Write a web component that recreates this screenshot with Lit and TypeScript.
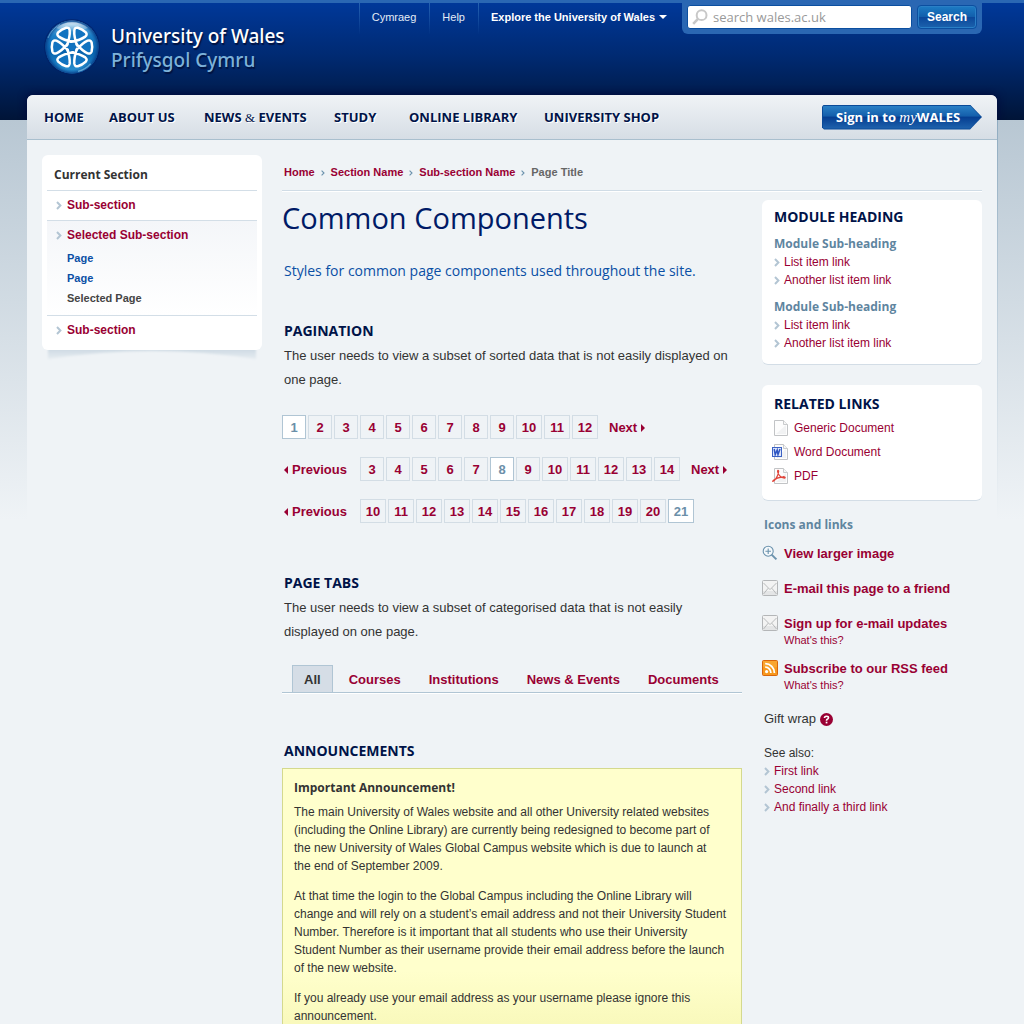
import { LitElement, html, css, svg, nothing } from "lit";
import { customElement, property } from "lit/decorators.js";
import { classMap } from "lit/directives/class-map.js";

const base = css`
  *, *::before, *::after { box-sizing: border-box; }
  h1, h2, h3, p, ul, ol { margin: 0; padding: 0; }
  ul, ol { list-style: none; }
  a { color: #990033; text-decoration: none; }
  a:hover { text-decoration: underline; }
  svg { display: block; flex: none; }
`;

const chevron = html`<svg class="chevron" width="6" height="9" viewBox="0 0 6 9" aria-hidden="true">
  <path d="M1 1 L4.4 4.5 L1 8" fill="none" stroke="#b3c5d3" stroke-width="2" />
</svg>`;

const crumbMark = html`<svg width="4" height="6" viewBox="0 0 4 6" aria-hidden="true">
  <path d="M0.6 0.6 L3 3 L0.6 5.4" fill="none" stroke="#6b92ad" stroke-width="1.1" />
</svg>`;

@customElement("uw-crest")
export class UwCrest extends LitElement {
  static styles = css`
    :host { display: block; flex: none; }
    svg { display: block; }
  `;

  render() {
    const petal = (angle: number) => svg`
      <path transform="rotate(${angle})"
        d="M4 3.4 C6.4 0.6 10.6 -4 15.6 -6.3 Q18.6 -7.4 19.6 -4.6 Q20.8 0 19.6 4.6 Q18.6 7.4 15.6 6.3 C10.6 4 6.4 -0.6 4 -3.4" />`;
    return html`
      <svg width="56" height="58" viewBox="-28 -28 56 58" role="img" aria-label="University of Wales crest">
        <defs>
          <linearGradient id="disc" x1="0" y1="0" x2="0" y2="1">
            <stop offset="0" stop-color="#8cc8ea" />
            <stop offset="0.28" stop-color="#1c7fc6" />
            <stop offset="0.6" stop-color="#0763ae" />
            <stop offset="1" stop-color="#2b96d6" />
          </linearGradient>
          <radialGradient id="rim" cx="0.5" cy="0.5" r="0.5">
            <stop offset="0.84" stop-color="#0a4e9c" stop-opacity="0" />
            <stop offset="1" stop-color="#073c86" stop-opacity="0.95" />
          </radialGradient>
          <linearGradient id="gloss" x1="0" y1="0" x2="0" y2="1">
            <stop offset="0" stop-color="#ffffff" stop-opacity="0.7" />
            <stop offset="1" stop-color="#ffffff" stop-opacity="0" />
          </linearGradient>
        </defs>
        <circle r="28" fill="#001f66" opacity="0.6" />
        <circle r="26.6" fill="url(#disc)" />
        <circle r="26.6" fill="url(#rim)" />
        <path d="M-16 -19 A25 25 0 0 1 16 -19 Q0 -11 -16 -19 Z" fill="url(#gloss)" />
        <path d="M-24 -9 A25.6 25.6 0 0 1 -12 -22.6" fill="none" stroke="#8cc6ea" stroke-width="1" opacity="0.6" />
        <path d="M6 24.4 A25 25 0 0 0 18.6 16.7" fill="none" stroke="#8cd0f2" stroke-width="1.4" opacity="0.6" />
        <g fill="#1173c0" stroke="#ffffff" stroke-width="2.5" stroke-linecap="round" stroke-linejoin="round">
          ${[0, 60, 120, 180, 240, 300].map(petal)}
        </g>
        <circle r="3.4" fill="#1173c0" />
      </svg>
    `;
  }
}

@customElement("uw-icon")
export class UwIcon extends LitElement {
  @property() name = "document";

  static styles = css`
    :host { display: block; flex: none; }
    svg { display: block; }
  `;

  private sheet(x: number) {
    return svg`
      <path d="M${x}.5 0.5 H${x + 9}.5 L${x + 13}.5 4.5 V15.5 H${x}.5 Z" fill="#fdfdfd" stroke="#c2c4c6" />
      <path d="M${x + 2} 14 L${x + 12} 5 V14 Z" fill="#f1f2f3" />
      <path d="M${x + 9}.5 0.5 V4.5 H${x + 13}.5" fill="#f6f6f6" stroke="#c9cbcd" />`;
  }

  private art() {
    switch (this.name) {
      case "word":
        return svg`${this.sheet(2)}
          <rect x="0.5" y="3.5" width="9" height="9" fill="#dfe7fa" stroke="#3c62c4" />
          <path d="M2.2 5 L3.2 10.6 L5.2 6 L6 10.6 L8 5" fill="none" stroke="#2f56c2" stroke-width="1.5" />`;
      case "pdf":
        return svg`${this.sheet(2)}
          <path d="M0.8 13.4 C2.6 12.8 6.2 8.6 6.6 3.4 C6.6 1.9 5.4 2.2 5.7 4 C6.2 7.2 9.4 9.8 12.4 10 C14 9.8 12.6 8.5 10.8 8.8 C7 9.2 3.2 10.8 1.2 12.6 Z"
            fill="none" stroke="#e0443a" stroke-width="1.3" stroke-linejoin="round" />`;
      case "zoom":
        return svg`
          <path d="M9.6 9.6 L14.4 14.4" stroke="#6b92ad" stroke-width="2" />
          <circle cx="6.2" cy="6.2" r="5" fill="#f4f8fb" stroke="#6b92ad" stroke-width="1.1" />
          <path d="M6.2 3.4 V9 M3.4 6.2 H9" stroke="#6b92ad" stroke-width="1.1" />`;
      case "mail":
        return svg`
          <rect x="0.5" y="0.5" width="15" height="15" rx="1" fill="#f3f3f3" stroke="#b4b6b8" />
          <path d="M1 11 H15 V15 H1 Z" fill="#e4e5e6" />
          <path d="M1.5 3 L8 9.6 L14.5 3 M1.5 14 L6.2 8.2 M14.5 14 L9.8 8.2" fill="none" stroke="#b2b4b6" stroke-width="0.9" />`;
      case "rss":
        return svg`
          <rect x="0.5" y="0.5" width="15" height="15" rx="1" fill="#f7981d" stroke="#d9650c" />
          <path d="M1 1 H15 V7 Q8 9 1 7 Z" fill="#fbb040" opacity="0.55" />
          <circle cx="4.6" cy="11.6" r="1.6" fill="#ffffff" />
          <path d="M3.2 7.2 A5.6 5.6 0 0 1 8.9 12.9 M3.2 3.7 A9.1 9.1 0 0 1 12.4 12.9" fill="none" stroke="#ffffff" stroke-width="1.8" />`;
      default:
        return this.sheet(2);
    }
  }

  render() {
    return html`<svg width="16" height="16" viewBox="0 0 16 16" aria-hidden="true">${this.art()}</svg>`;
  }
}

@customElement("uw-header")
export class UwHeader extends LitElement {
  static styles = [base, css`
    :host { display: block; color: #ffffff; font-family: "Liberation Sans", Arial, sans-serif; }
    .bar {
      display: flex; justify-content: space-between; align-items: flex-start;
      max-width: 970px; height: 95px; margin: 0 auto; padding: 0 15px 0 17px;
    }
    .brand { display: flex; align-items: center; gap: 11px; padding-top: 19px; }
    .brand:hover { text-decoration: none; }
    .names {
      display: flex; flex-direction: column;
      font: 500 19px/24px "Noto Sans", sans-serif;
      text-shadow: 1px 2px 1px #00123f;
    }
    .english { color: #ffffff; }
    .welsh { color: #7db2d9; }
    .tools { display: flex; align-items: flex-start; }
    .tool {
      display: flex; align-items: center; gap: 4px; height: 34px; padding: 0 13px 0 12px;
      border: 0; border-left: 1px solid;
      border-image: linear-gradient(#2a67b3, transparent) 1;
      background: none; color: #e4ecf6;
      font: 11px/16px "Liberation Sans", Arial, sans-serif;
    }
    .strong { padding-right: 15px; font-weight: 700; color: #ffffff; }
    .search {
      display: flex; gap: 5px; width: 300px; height: 34px; padding: 5px;
      background: #2a67b3; border-radius: 0 0 6px 6px;
    }
    .field {
      display: flex; align-items: center; gap: 5px; flex: 1; min-width: 0; padding-left: 4px;
      background: #ffffff; border: 1px solid #0b4fa0; border-radius: 3px;
    }
    .box {
      flex: 1; min-width: 0; padding: 0; border: 0; outline: 0; background: none; color: #333333;
      font: 13px/20px "Open Sans", sans-serif;
    }
    .box::placeholder { color: #999999; opacity: 1; }
    .go {
      width: 60px; padding: 0; border: 1px solid #0b4fa0; border-radius: 4px; color: #ffffff;
      background: linear-gradient(#1d7cc4, #125fac 48%, #0b489b 52%, #1c62ad);
      box-shadow: inset 0 0 0 1px #2a7fc6;
      font: 700 12px/16px "Liberation Sans", Arial, sans-serif;
    }
  `];

  render() {
    return html`
      <header class="bar">
        <a class="brand" href="#home">
          <uw-crest></uw-crest>
          <span class="names">
            <span class="english">University of Wales</span>
            <span class="welsh" lang="cy">Prifysgol Cymru</span>
          </span>
        </a>
        <div class="tools">
          <a class="tool" href="#cymraeg" lang="cy">Cymraeg</a>
          <a class="tool" href="#help">Help</a>
          <button class="tool strong" type="button">
            Explore the University of Wales
            <svg width="8" height="4" viewBox="0 0 8 4" aria-hidden="true"><path d="M0 0 H8 L4 4 Z" fill="#ffffff" /></svg>
          </button>
          <form class="search" role="search">
            <label class="field">
              <svg width="16" height="16" viewBox="0 0 16 16" aria-hidden="true">
                <circle cx="9.6" cy="6.2" r="4.9" fill="none" stroke="#c8c8c8" stroke-width="2" />
                <path d="M6 9.8 L1.2 14.8" stroke="#c8c8c8" stroke-width="2.6" />
              </svg>
              <input class="box" type="search" placeholder="search wales.ac.uk" aria-label="Search wales.ac.uk" />
            </label>
            <button class="go" type="button">Search</button>
          </form>
        </div>
      </header>
    `;
  }
}

@customElement("uw-nav")
export class UwNav extends LitElement {
  static styles = [base, css`
    :host { display: block; position: relative; z-index: 0; font-family: "Open Sans", sans-serif; }
    :host::before {
      content: ""; position: absolute; inset: 0 0 auto 0; height: 25px; z-index: -1;
      border-radius: 6px 6px 0 0; box-shadow: 0 0 8px 1px #000a3c;
      clip-path: inset(-10px -10px 0 -10px);
    }
    .nav {
      display: flex; justify-content: space-between; align-items: center;
      height: 45px; padding: 0 15px 0 17px;
      background: linear-gradient(#f0f3f6, #d6dde5);
      border-bottom: 1px solid #a9bfce; border-radius: 6px 6px 0 0;
    }
    .links { display: grid; grid-template-columns: 65px 95px 130px 75px 135px auto; }
    .link {
      color: #001348; font-size: 13px; font-weight: 700; line-height: 18px; white-space: nowrap;
      text-shadow: 1px 1px 0 #ffffff;
    }
    .amp { font-weight: 400; font-family: "Liberation Serif", serif; }
    .signin {
      display: block; padding: 1px; background: #0a4a98;
      clip-path: polygon(2px 0, 148px 0, 100% 50%, 148px 100%, 2px 100%, 0 23px, 0 2px);
    }
    .face {
      display: flex; align-items: center; width: 158px; height: 23px; padding-left: 13px;
      background: linear-gradient(#2a80c6, #1560ac 42%, #063f92 50%, #1f63ad);
      clip-path: polygon(1px 0, 147px 0, 100% 50%, 147px 100%, 1px 100%, 0 22px, 0 1px);
      color: #ffffff; font-size: 13px; font-weight: 700; white-space: pre;
    }
    .my { font: italic 400 15px/16px "Liberation Serif", serif; }
  `];

  render() {
    return html`
      <nav class="nav" aria-label="Main">
        <div class="links">
          <a class="link" href="#home">HOME</a>
          <a class="link" href="#about">ABOUT US</a>
          <a class="link" href="#news">NEWS <span class="amp">&amp;</span> EVENTS</a>
          <a class="link" href="#study">STUDY</a>
          <a class="link" href="#library">ONLINE LIBRARY</a>
          <a class="link" href="#shop">UNIVERSITY SHOP</a>
        </div>
        <a class="signin" href="#signin"><span class="face">Sign in to <span class="my">my</span>WALES</span></a>
      </nav>
    `;
  }
}

@customElement("uw-section-menu")
export class UwSectionMenu extends LitElement {
  static styles = [base, css`
    :host { display: block; font: 700 12px/18px "Liberation Sans", Arial, sans-serif; }
    .menu { padding: 0 5px 5px; background: #ffffff; border-radius: 6px; }
    .title {
      height: 35px; padding: 11px 7px 0; color: #333333;
      font: 700 12px/18px "Open Sans", sans-serif;
    }
    .item { padding: 5px 9px 6px; border-top: 1px solid #d3dee7; }
    .selected { padding-bottom: 7px; background: linear-gradient(#f4f6f9, #ffffff); }
    .link { display: flex; align-items: center; gap: 5px; }
    .pages { padding: 4px 0 0 11px; font-size: 11px; line-height: 20px; color: #444444; }
    .page { color: #0a4fa5; }
    .shadow { display: block; width: 100%; height: 12px; }
  `];

  render() {
    return html`
      <nav class="menu" aria-label="Section">
        <h2 class="title">Current Section</h2>
        <ul>
          <li class="item"><a class="link" href="#sub-1">${chevron}Sub-section</a></li>
          <li class="item selected">
            <a class="link" href="#sub-2">${chevron}Selected Sub-section</a>
            <ul class="pages">
              <li><a class="page" href="#page-1">Page</a></li>
              <li><a class="page" href="#page-2">Page</a></li>
              <li>Selected Page</li>
            </ul>
          </li>
          <li class="item"><a class="link" href="#sub-3">${chevron}Sub-section</a></li>
        </ul>
      </nav>
      <svg class="shadow" viewBox="0 0 220 12" preserveAspectRatio="none" aria-hidden="true">
        <defs>
          <linearGradient id="fade" x1="0" y1="0" x2="0" y2="1">
            <stop offset="0" stop-color="#c6d4df" />
            <stop offset="1" stop-color="#dae3ea" stop-opacity="0.5" />
          </linearGradient>
          <filter id="soft" x="-5%" y="-50%" width="110%" height="200%">
            <feGaussianBlur stdDeviation="1" />
          </filter>
        </defs>
        <path d="M6 -3 H214 V9 Q160 1 110 1 Q60 1 6 9 Z" fill="url(#fade)" filter="url(#soft)" />
      </svg>
    `;
  }
}

@customElement("uw-pagination")
export class UwPagination extends LitElement {
  @property({ type: Number }) first = 1;
  @property({ type: Number }) last = 12;
  @property({ type: Number }) current = 1;
  @property({ type: Boolean }) previous = false;
  @property({ type: Boolean }) next = false;

  static styles = [base, css`
    :host { display: block; font: 700 13px/24px "Liberation Sans", Arial, sans-serif; }
    .row { display: flex; align-items: center; }
    .step { display: flex; align-items: center; gap: 4px; height: 24px; padding-top: 2px; }
    .back { width: 78px; padding-left: 2px; }
    .forward { padding-left: 11px; }
    .pages { display: flex; gap: 2px; }
    .page {
      display: block; width: 24px; height: 24px; border: 1px solid #d3dde5; text-align: center;
    }
    .wide { width: 26px; }
    .current { background: #ffffff; border-color: #b0c5d4; color: #6b8fa9; }
  `];

  render() {
    const pages = Array.from({ length: this.last - this.first + 1 }, (_, i) => this.first + i);
    return html`
      <nav class="row" aria-label="Pagination">
        ${this.previous
          ? html`<a class="step back" href="#previous"><svg width="4" height="8" viewBox="0 0 4 8" aria-hidden="true"><path d="M4 0 V8 L0 4 Z" fill="#990033" /></svg>Previous</a>`
          : nothing}
        <ol class="pages">
          ${pages.map((n) => {
            const here = n === this.current;
            return html`<li><a href="#page-${n}" aria-current=${here ? "page" : "false"}
              class=${classMap({ page: true, wide: n > 9, current: here })}>${n}</a></li>`;
          })}
        </ol>
        ${this.next
          ? html`<a class="step forward" href="#next">Next<svg width="4" height="8" viewBox="0 0 4 8" aria-hidden="true"><path d="M0 0 V8 L4 4 Z" fill="#990033" /></svg></a>`
          : nothing}
      </nav>
    `;
  }
}

@customElement("uw-aside")
export class UwAside extends LitElement {
  static styles = [base, css`
    :host { display: block; color: #333333; font: 12px/18px "Liberation Sans", Arial, sans-serif; }
    .module {
      margin-bottom: 20px; padding: 8px 12px 12px;
      background: #ffffff; border-bottom: 1px solid #d3dde6; border-radius: 6px;
    }
    .related { margin-bottom: 15px; padding-top: 10px; }
    .heading { color: #001348; font: 700 14px/18px "Open Sans", sans-serif; }
    .sub { margin-top: 9px; color: #5f859f; font: 700 12px/18px "Open Sans", sans-serif; }
    .item { display: flex; align-items: center; gap: 4px; }
    .docs { padding-top: 3px; line-height: 24px; }
    .doc { display: flex; align-items: center; gap: 6px; margin-left: -2px; }
    .loose { padding-left: 2px; color: #5f859f; font: 700 12px/18px "Open Sans", sans-serif; }
    .actions { display: flex; flex-direction: column; gap: 17px; padding-top: 11px; }
    .action { display: flex; gap: 6px; align-items: flex-start; }
    .strong { display: block; font-size: 13px; font-weight: 700; }
    .what { display: block; margin-bottom: -4px; font-size: 11px; line-height: 14px; }
    .gift { display: flex; align-items: center; gap: 4px; padding: 22px 0 16px 2px; font-size: 13px; }
    .help { padding: 0; border: 0; background: none; }
    .also { padding-left: 2px; }
  `];

  private item(text: string) {
    return html`<li><a class="item" href="#link">${chevron}${text}</a></li>`;
  }

  private doc(icon: string, text: string) {
    return html`<li><a class="doc" href="#doc"><uw-icon name=${icon}></uw-icon>${text}</a></li>`;
  }

  private action(icon: string, text: string, what = false) {
    return html`<li class="action">
      <uw-icon name=${icon}></uw-icon>
      <div>
        <a class="strong" href="#action">${text}</a>
        ${what ? html`<a class="what" href="#what">What's this?</a>` : nothing}
      </div>
    </li>`;
  }

  render() {
    return html`
      <section class="module">
        <h2 class="heading">MODULE HEADING</h2>
        ${[1, 2].map(() => html`
          <h3 class="sub">Module Sub-heading</h3>
          <ul>${this.item("List item link")}${this.item("Another list item link")}</ul>
        `)}
      </section>
      <section class="module related">
        <h2 class="heading">RELATED LINKS</h2>
        <ul class="docs">
          ${this.doc("document", "Generic Document")}
          ${this.doc("word", "Word Document")}
          ${this.doc("pdf", "PDF")}
        </ul>
      </section>
      <h3 class="loose">Icons and links</h3>
      <ul class="actions">
        ${this.action("zoom", "View larger image")}
        ${this.action("mail", "E-mail this page to a friend")}
        ${this.action("mail", "Sign up for e-mail updates", true)}
        ${this.action("rss", "Subscribe to our RSS feed", true)}
      </ul>
      <p class="gift">
        Gift wrap
        <button class="help" type="button" aria-label="Help with gift wrap">
          <svg width="13" height="13" viewBox="0 0 13 13" aria-hidden="true">
            <circle cx="6.5" cy="6.5" r="6.5" fill="#990033" />
            <path d="M4.5 5 Q4.5 3.2 6.5 3.2 Q8.5 3.2 8.5 4.8 Q8.5 5.8 7.3 6.3 Q6.5 6.7 6.5 7.8" fill="none" stroke="#ffffff" stroke-width="1.6" />
            <rect x="5.7" y="8.7" width="1.7" height="1.7" fill="#ffffff" />
          </svg>
        </button>
      </p>
      <div class="also">
        <p>See also:</p>
        <ul>${this.item("First link")}${this.item("Second link")}${this.item("And finally a third link")}</ul>
      </div>
    `;
  }
}

@customElement("app-root")
export class AppRoot extends LitElement {
  static styles = [base, css`
    :host {
      display: block; min-height: 100vh; color: #333333;
      font: 13px/24px "Liberation Sans", Arial, sans-serif;
      background:
        linear-gradient(#2a67b3, #2a67b3) 0 0 / 100% 3px no-repeat,
        linear-gradient(#003899, #002a72 45%, #001437) 0 3px / 100% 117px no-repeat,
        linear-gradient(#8fabc0, #eff3f6) calc(50% - 485px) 120px / 1px 400px no-repeat,
        linear-gradient(#8fabc0, #eff3f6) calc(50% + 485px) 120px / 1px 400px no-repeat,
        linear-gradient(#b8c7d3, #eff3f6) 0 120px / 100% 400px no-repeat,
        #eff3f6;
    }
    .page { max-width: 970px; margin: 0 auto; background: #eff3f6; border-radius: 6px 6px 0 0; }
    .columns {
      display: grid; grid-template-columns: 220px minmax(0, 1fr) 220px; column-gap: 20px;
      align-items: start; padding: 15px 15px 24px;
    }
    .menu { grid-row: 1 / span 2; }
    .crumbs {
      grid-column: 2 / span 2; display: flex; height: 36px; padding-left: 2px;
      border-bottom: 1px solid #d0dce6; box-shadow: 0 1px 0 #ffffff;
      color: #666666; font-size: 11px; font-weight: 700; line-height: 35px;
    }
    .crumb { display: flex; align-items: center; gap: 6px; padding-right: 6px; }
    .aside { padding-top: 9px; }
    .title { margin-top: 7px; color: #001a66; font: 400 29px/40px "Open Sans", sans-serif; }
    .intro { margin: 21px 0 36px; padding-left: 2px; color: #0a4fa5; font: 14px/24px "Open Sans", sans-serif; }
    .heading { padding-left: 2px; color: #001348; font: 700 14px/24px "Open Sans", sans-serif; }
    .text { padding: 1px 10px 0 2px; }
    .pagers { display: flex; flex-direction: column; gap: 18px; margin: 23px 0 48px; }
    .tabs {
      display: flex; gap: 4px; margin: 21px 0 46px; padding-left: 10px;
      border-bottom: 1px solid #b0c5d4; box-shadow: 0 1px 0 #ffffff;
    }
    .tab {
      display: block; padding: 1px 12px 0; border-top: 1px solid transparent;
      font-weight: 700; line-height: 25px;
    }
    .active { padding: 1px 11px 0; background: #d5dde6; border: 1px solid #b0c5d4; border-bottom: 0; color: #333333; }
    .notice {
      display: flex; flex-direction: column; gap: 12px; margin-top: 5px; padding: 10px 13px 24px 11px;
      background: linear-gradient(#ffffcc 72%, #f6f6b4); border: 1px solid #d4d98e;
      font-size: 12px; line-height: 18px;
    }
    .alert { margin-bottom: -6px; font: 700 12px/18px "Open Sans", sans-serif; }
  `];

  render() {
    const crumbs = ["Home", "Section Name", "Sub-section Name"];
    const tabs = ["All", "Courses", "Institutions", "News & Events", "Documents"];
    return html`
      <uw-header></uw-header>
      <div class="page">
        <uw-nav></uw-nav>
        <div class="columns">
          <uw-section-menu class="menu"></uw-section-menu>
          <nav class="crumbs" aria-label="Breadcrumb">
            ${crumbs.map((c) => html`<span class="crumb"><a href="#crumb">${c}</a>${crumbMark}</span>`)}
            <span>Page Title</span>
          </nav>
          <main>
            <h1 class="title">Common Components</h1>
            <p class="intro">Styles for common page components used throughout the site.</p>

            <h2 class="heading">PAGINATION</h2>
            <p class="text">The user needs to view a subset of sorted data that is not easily displayed on one page.</p>
            <div class="pagers">
              <uw-pagination first="1" last="12" current="1" next></uw-pagination>
              <uw-pagination first="3" last="14" current="8" previous next></uw-pagination>
              <uw-pagination first="10" last="21" current="21" previous></uw-pagination>
            </div>

            <h2 class="heading">PAGE TABS</h2>
            <p class="text">The user needs to view a subset of categorised data that is not easily displayed on one page.</p>
            <ul class="tabs">
              ${tabs.map((t, i) => html`<li><a href="#tab" class=${classMap({ tab: true, active: i === 0 })}>${t}</a></li>`)}
            </ul>

            <h2 class="heading">ANNOUNCEMENTS</h2>
            <section class="notice">
              <h3 class="alert">Important Announcement!</h3>
              <p>The main University of Wales website and all other University related websites (including the Online Library) are currently being redesigned to become part of the new University of Wales Global Campus website which is due to launch at<br />the end of September 2009.</p>
              <p>At that time the login to the Global Campus including the Online Library will change and will rely on a student’s email address and not their University Student Number. Therefore is it important that all students who use their University Student Number as their username provide their email address before the launch of the new website.</p>
              <p>If you already use your email address as your username please ignore this announcement.</p>
            </section>
          </main>
          <uw-aside class="aside"></uw-aside>
        </div>
      </div>
    `;
  }
}
